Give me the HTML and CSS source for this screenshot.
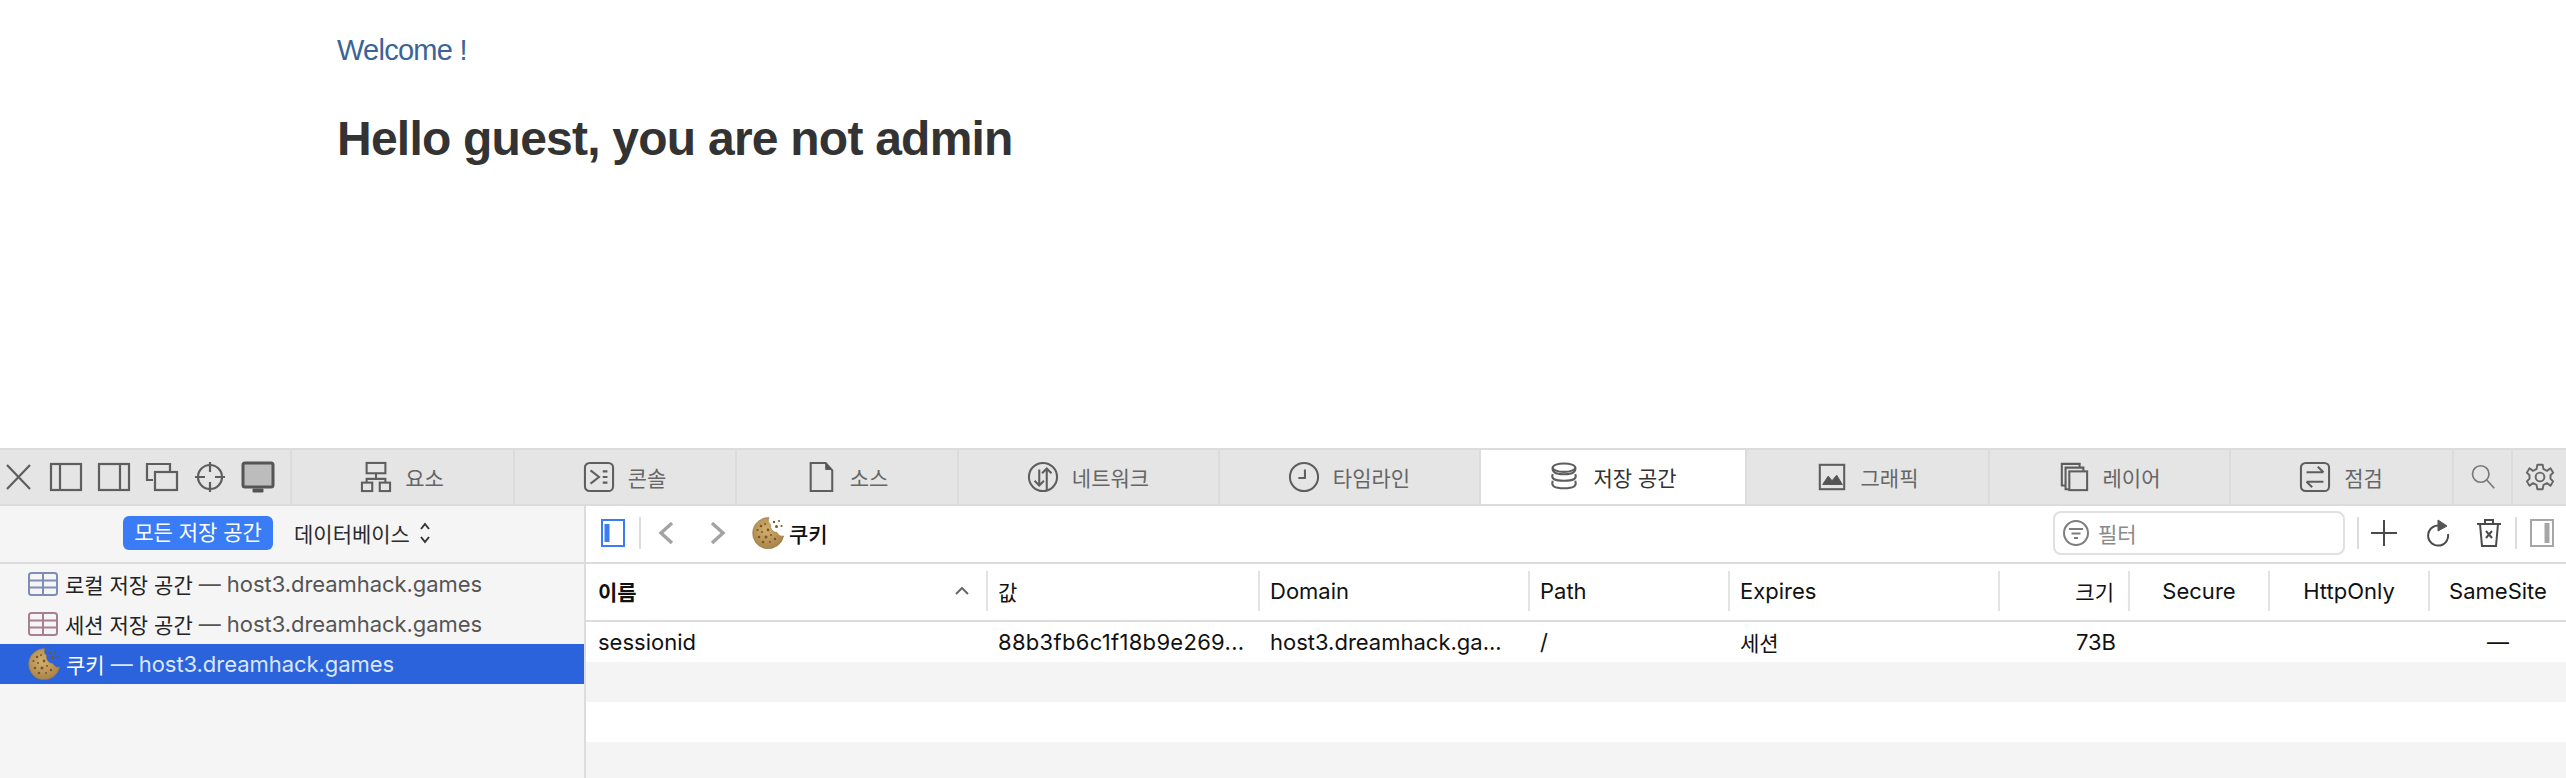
FILE: index.html
```html
<!DOCTYPE html>
<html lang="ko">
<head>
<meta charset="utf-8">
<title>Welcome</title>
<link rel="stylesheet" href="styles.css">
</head>
<body>
<svg class="defs" width="0" height="0" aria-hidden="true">
  <defs>
    <radialGradient id="cookieFill" cx="45%" cy="40%" r="65%">
      <stop offset="0" stop-color="#d3b16f"/>
      <stop offset="1" stop-color="#a67f45"/>
    </radialGradient>
    <symbol id="cookie" viewBox="0 0 32 32">
      <path d="M17 0.6 A15.6 15.6 0 1 0 31.6 19 A6 6 0 0 1 25 15.5 A6.5 6.5 0 0 1 18.6 7.6 A5.6 5.6 0 0 1 17 0.6Z" fill="url(#cookieFill)" stroke="#96753f" stroke-width=".6"/>
      <g fill="#7d5426">
        <circle cx="9" cy="9" r="1.3"/><circle cx="13" cy="7" r="1"/><circle cx="5.5" cy="13" r="1.1"/>
        <circle cx="10" cy="15" r="1"/><circle cx="16" cy="13" r="1.4"/><circle cx="7" cy="20" r="1.3"/>
        <circle cx="14" cy="20" r="1.5"/><circle cx="19" cy="18" r="1"/><circle cx="11" cy="25" r="1.3"/>
        <circle cx="18" cy="25" r="1"/><circle cx="23" cy="22" r="1.2"/>
        <circle cx="22" cy="5" r="1.2"/><circle cx="27" cy="4" r="1"/><circle cx="24.5" cy="9.5" r="1.5"/><circle cx="29.5" cy="9" r="1.1"/>
      </g>
    </symbol>
    <symbol id="table" viewBox="0 0 30 24">
      <rect x="1" y="1" width="28" height="22" rx="2.5" fill="none" stroke="currentColor" stroke-width="2"/>
      <path d="M1 8.500H29M1 15.500H29M15 1V23" fill="none" stroke="currentColor" stroke-width="2"/>
    </symbol>
  </defs>
</svg>

<main class="page">
  <p class="welcome">Welcome !</p>
  <h2 class="greeting">Hello guest, you are not admin</h2>
</main>

<section class="devtools">
  <nav class="tabbar">
    <div class="tool-icons">
      <svg class="ticon" viewBox="0 0 32 32"><path d="M5 4L28 28M28 4L5 28"/></svg>
      <svg class="ticon" viewBox="0 0 32 32"><rect x="1" y="3" width="30" height="26"/><path d="M10 3V29"/></svg>
      <svg class="ticon" viewBox="0 0 32 32"><rect x="1" y="3" width="30" height="26"/><path d="M22 3V29"/></svg>
      <svg class="ticon" viewBox="0 0 32 32"><path d="M7 19H1V3H24V10"/><rect x="9" y="11" width="22" height="18"/></svg>
      <svg class="ticon" viewBox="0 0 32 32"><circle cx="16" cy="16" r="12"/><path d="M16 1V11M16 21V31M1 16H11M21 16H31"/></svg>
      <svg class="ticon" viewBox="0 0 32 32"><rect x="1" y="2" width="30" height="24" rx="2" class="fill-grey"/><path d="M11 31H21V28H11Z" class="fill-dark"/></svg>
    </div>
    <a class="tab"><svg class="ticon tab-glyph" viewBox="0 0 32 32"><rect x="6" y="1" width="20" height="11"/><path d="M16 12V18M6 22V18H26V22"/><rect x="1" y="22" width="11" height="9"/><rect x="20" y="22" width="11" height="9"/></svg><span>요소</span></a>
    <a class="tab"><svg class="ticon tab-glyph" viewBox="0 0 32 32"><rect x="1" y="1" width="30" height="30" rx="5"/><path d="M7 9L16 16L7 23M20 10H25M20 16H25M20 22H25"/></svg><span>콘솔</span></a>
    <a class="tab"><svg class="ticon tab-glyph" viewBox="0 0 32 32"><path d="M5 1H21L28 9V31H5Z"/><path d="M21 2V8H27Z" class="fill-dark"/></svg><span>소스</span></a>
    <a class="tab"><svg class="ticon tab-glyph" viewBox="0 0 32 32"><circle cx="16" cy="16" r="15"/><path d="M12 8V25M7 20L12 25L17 20M20 31V7M15 12L20 7L25 12"/></svg><span>네트워크</span></a>
    <a class="tab"><svg class="ticon tab-glyph" viewBox="0 0 32 32"><circle cx="16" cy="16" r="15"/><path d="M17 8V17H10"/></svg><span>타임라인</span></a>
    <a class="tab tab-active"><svg class="ticon tab-glyph" viewBox="0 0 32 32"><ellipse cx="16" cy="6" rx="12" ry="4.500"/><path d="M4 6C3 10 6 13 16 13S29 10 28 6M4 13C2 18 6 20 16 20S30 18 28 13M4 20C2 26 6 28 16 28S30 26 28 20"/></svg><span>저장 공간</span></a>
    <a class="tab"><svg class="ticon tab-glyph" viewBox="0 0 32 32"><rect x="3" y="3" width="26" height="26"/><path d="M6 24L12 15L16 20L21 14L27 24Z" class="fill-dark"/></svg><span>그래픽</span></a>
    <a class="tab"><svg class="ticon tab-glyph" viewBox="0 0 32 32"><path d="M7 25H3V2H22V6"/><path d="M11 29H7V6H26V10"/><rect x="11" y="10" width="19" height="20"/></svg><span>레이어</span></a>
    <a class="tab"><svg class="ticon tab-glyph" viewBox="0 0 32 32"><rect x="1" y="1" width="30" height="30" rx="5"/><path d="M7 11H25M19 5L25 11M25 21H7M13 27L7 21"/></svg><span>점검</span></a>
    <a class="tab"><svg class="ticon search-glyph" viewBox="0 0 32 32"><circle cx="13" cy="12" r="11"/><path d="M21 20L31 31"/></svg></a>
    <a class="tab tab-last"><svg class="ticon gear-glyph" viewBox="0 0 32 32"><circle cx="16" cy="16" r="5"/><path d="M13 2H19L20 7L24 9L28 6L31 11L28 14V18L31 21L28 26L24 23L20 25L19 30H13L12 25L8 23L4 26L1 21L4 18V14L1 11L4 6L8 9L12 7Z"/></svg></a>
  </nav>

  <div class="panes">
    <aside class="sidebar">
      <div class="scope">
        <span class="pill">모든 저장 공간</span>
        <span class="scope-select">데이터베이스
          <svg class="updown" viewBox="0 0 12 24"><path d="M2 8L6 3L10 8M2 16L6 21L10 16"/></svg>
        </span>
      </div>
      <ul class="tree">
        <li class="tree-row"><svg class="table-icon table-blue"><use href="#table"/></svg><span class="tree-name">로컬 저장 공간</span><span class="tree-host">— host3.dreamhack.games</span></li>
        <li class="tree-row"><svg class="table-icon table-red"><use href="#table"/></svg><span class="tree-name">세션 저장 공간</span><span class="tree-host">— host3.dreamhack.games</span></li>
        <li class="tree-row tree-selected"><svg class="cookie-icon"><use href="#cookie"/></svg><span class="tree-name">쿠키</span><span class="tree-host">— host3.dreamhack.games</span></li>
      </ul>
    </aside>

    <div class="content">
      <div class="toolbar">
        <svg class="panel-icon panel-blue" viewBox="0 0 24 28"><rect x="1" y="1" width="22" height="26"/><path d="M6 5V23"/></svg>
        <i class="vsep"></i>
        <svg class="nav-arrow" viewBox="0 0 16 24"><path d="M14 2L3 12L14 22"/></svg>
        <svg class="nav-arrow" viewBox="0 0 16 24"><path d="M2 2L13 12L2 22"/></svg>
        <svg class="cookie-icon crumb"><use href="#cookie"/></svg>
        <span class="crumb-text">쿠키</span>
        <div class="filter">
          <svg class="filter-icon" viewBox="0 0 26 26"><circle cx="13" cy="13" r="12"/><path d="M6 9H20M8.500 13.500H17.500M11 18H15"/></svg>
          <span>필터</span>
        </div>
        <i class="vsep"></i>
        <svg class="act-icon act-plus" viewBox="0 0 26 26"><path d="M13 0V26M0 13H26"/></svg>
        <svg class="act-icon act-reload" viewBox="0 0 24 28"><path d="M15 7A10 10 0 1 0 22 15"/><path d="M12 1L21 7L12 12Z" class="fill-dark"/></svg>
        <svg class="act-icon act-trash" viewBox="0 0 26 28"><path d="M1 5H25M9 5V1H17V5M4 5L6 27H20L22 5M10 12L16 19M16 12L10 19"/></svg>
        <i class="vsep"></i>
        <svg class="panel-icon panel-grey" viewBox="0 0 24 28"><rect x="1" y="1" width="22" height="26"/><path d="M17 4V24" class="panel-bar"/></svg>
      </div>

      <div class="grid grid-head">
        <div class="cell cell-first cell-sort"><b class="ko">이름</b><svg class="caret" viewBox="0 0 14 8"><path d="M1 7L7 1L13 7"/></svg></div>
        <div class="cell ko">값</div>
        <div class="cell">Domain</div>
        <div class="cell">Path</div>
        <div class="cell">Expires</div>
        <div class="cell cell-right ko">크기</div>
        <div class="cell cell-center">Secure</div>
        <div class="cell cell-center">HttpOnly</div>
        <div class="cell cell-center">SameSite</div>
      </div>
      <div class="grid grid-row">
        <div class="cell cell-first">sessionid</div>
        <div class="cell cell-value">88b3fb6c1f18b9e269...</div>
        <div class="cell">host3.dreamhack.ga...</div>
        <div class="cell">/</div>
        <div class="cell ko">세션</div>
        <div class="cell cell-right">73B</div>
        <div class="cell"></div>
        <div class="cell"></div>
        <div class="cell cell-center">—</div>
      </div>
      <div class="stripe stripe-grey"></div>
      <div class="stripe"></div>
      <div class="stripe stripe-grey stripe-end"></div>
    </div>
  </div>
</section>
</body>
</html>
```
FILE: styles.css
```css
* { box-sizing: border-box; }
html, body { margin: 0; height: 100%; }
body {
  width: 2566px;
  height: 778px;
  display: flex;
  flex-direction: column;
  overflow: hidden;
  background: #fff;
  font-family: "Inter", "Noto Sans CJK KR", sans-serif;
}
.defs { display: block; height: 0; }

.page {
  flex: 1;
  padding: 34px 0 0 337px;
  font-family: "Liberation Sans", Arial, sans-serif;
}
.welcome { margin: 0; font-size: 29px; line-height: 32px; color: #3b6497; letter-spacing: -.75px; }
.greeting { margin: 45px 0 0; font-size: 48px; line-height: 56px; color: #333; font-weight: 700; letter-spacing: -.77px; }

.devtools { height: 330px; display: flex; flex-direction: column; border-top: 2px solid #dcdcdc; font-size: 21px; }

/* tab bar */
.tabbar {
  height: 56px;
  display: grid;
  grid-template-columns: 292px 223px 222px 222px 261px 261px 266px 243px 241px 223px 59px 53px;
  background: #e5e5e5;
  border-bottom: 2px solid #dcdcdc;
  color: #666;
}
.tool-icons { display: flex; align-items: center; gap: 16px; padding-left: 2px; border-right: 2px solid #dcdcdc; }
.ticon { width: 32px; height: 32px; flex: none; fill: none; stroke: #5e5e5e; stroke-width: 2.2; overflow: visible; }
.tab-glyph { width: 30px; height: 30px; }
.search-glyph { width: 24px; height: 24px; stroke: #777; }
.gear-glyph { width: 28px; height: 28px; stroke: #666; stroke-linejoin: round; }
.fill-grey { fill: #bcbcbc; stroke: #555; stroke-width: 3; }
.fill-dark { fill: #555; stroke: #555; stroke-width: 1; }
.tab { display: flex; align-items: center; justify-content: center; gap: 14px; border-right: 2px solid #dcdcdc; }
.tab-active { background: #fff; color: #333; }
.tab-last { border-right: 0; }

/* panes */
.panes { flex: 1; display: flex; min-height: 0; }
.sidebar { width: 586px; flex: none; background: #f5f5f5; border-right: 2px solid #dcdcdc; }
.scope {
  height: 58px;
  display: flex;
  align-items: center;
  padding: 0 0 2px 123px;
  gap: 21px;
  border-bottom: 2px solid #dcdcdc;
  color: #2b2b2b;
}
.pill { width: 150px; height: 34px; line-height: 33px; text-align: center; background: #3a7bf6; color: #fff; border-radius: 6px; }
.scope-select { display: flex; align-items: center; gap: 9px; }
.updown { width: 12px; height: 24px; fill: none; stroke: #333; stroke-width: 2; }
.tree { list-style: none; margin: 0; padding: 0; }
.tree-row { height: 40px; display: flex; align-items: center; padding-left: 28px; white-space: nowrap; color: #222; }
.tree-name { margin-left: 7px; }
.tree-host { margin-left: 6px; color: #555; font-size: 22px; letter-spacing: -.05px; }
.tree-selected { background: #2b63dc; color: #fff; }
.tree-selected .tree-name { margin-left: 6px; }
.tree-selected .tree-host { color: #dbe6fb; }
.table-icon { width: 30px; height: 24px; flex: none; }
.table-blue { color: #7d8db6; }
.table-red { color: #a87f90; }
.cookie-icon { width: 32px; height: 32px; flex: none; }

/* toolbar */
.content { flex: 1; display: flex; flex-direction: column; min-width: 0; }
.toolbar { height: 58px; flex: none; display: flex; align-items: center; padding: 0 12px 2px 15px; border-bottom: 2px solid #dcdcdc; }
.panel-icon { width: 24px; height: 28px; flex: none; fill: none; }
.panel-blue { stroke: #3a7bf6; stroke-width: 2; }
.panel-blue path { stroke-width: 5; }
.panel-grey { stroke: #a6a6a6; stroke-width: 2; }
.panel-bar { stroke-width: 5; }
.vsep { width: 2px; height: 32px; background: #dcdcdc; flex: none; }
.toolbar > .vsep:nth-of-type(1) { margin-left: 14px; }
.nav-arrow { width: 16px; height: 24px; flex: none; fill: none; stroke: #a3a3a3; stroke-width: 3.4; margin-left: 17px; }
.nav-arrow + .nav-arrow { margin-left: 36px; }
.crumb { margin-left: 26px; }
.crumb-text { margin-left: 5px; color: #111; font-weight: 500; flex: 1; }
.filter { width: 292px; height: 44px; display: flex; align-items: center; gap: 9px; padding-left: 8px; border: 2px solid #e0e0e0; border-radius: 8px; color: #8a8a8a; margin-right: 12px; }
.filter-icon { width: 26px; height: 26px; fill: none; stroke: #7d7d7d; stroke-width: 2; }
.act-icon { flex: none; fill: none; stroke: #4a4a4a; stroke-width: 2; overflow: visible; }
.act-plus { width: 26px; height: 26px; margin-left: 12px; }
.act-reload { width: 24px; height: 28px; margin-left: 29px; }
.act-trash { width: 26px; height: 28px; margin: 0 13px 0 26px; }
.panel-grey { margin-left: 13px; }

/* table */
.grid { display: grid; grid-template-columns: 402px 272px 270px 200px 270px 130px 140px 160px 1fr; flex: none; color: #111; font-size: 22px; white-space: nowrap; }
.grid-head { height: 58px; border-bottom: 2px solid #dcdcdc; padding-bottom: 2px; align-items: center; }
.grid-head .cell { height: 40px; border-right: 2px solid #e3e3e3; }
.grid-head .cell:last-child { border-right: 0; }
.grid-row { height: 40px; }
.cell { display: flex; align-items: center; padding: 0 8px 0 10px; overflow: hidden; }
.cell-first { padding-left: 12px; }
.cell-value { letter-spacing: .3px; }
.cell-sort { justify-content: space-between; padding-right: 17px; }
.cell-sort b { font-weight: 700; }
.cell-right { justify-content: flex-end; padding-right: 14px; }
.cell-center { justify-content: center; padding: 0; }
.ko { font-size: 21px; }
.caret { width: 14px; height: 8px; fill: none; stroke: #666; stroke-width: 2; }
.stripe { height: 40px; flex: none; }
.stripe-grey { background: #f4f4f4; }
.stripe-end { flex: 1; }
```
